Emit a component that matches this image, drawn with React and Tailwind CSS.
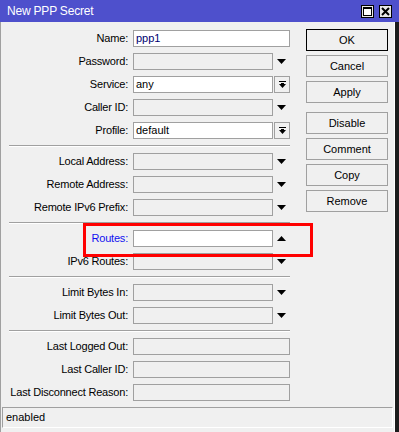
import React from 'react';

const Down = () => (
    <svg width="9" height="5" viewBox="0 0 9 5"><polygon points="0,0 9,0 4.5,5" fill="#000" /></svg>
);
const Up = () => (
    <svg width="9" height="5" viewBox="0 0 9 5"><polygon points="0,5 9,5 4.5,0" fill="#000" /></svg>
);

const Field = ({ label, value = "", white = false, kind = "arrow", blue = false }) => {
    const wide = kind === "wide";
    return (
        <div className="flex items-center h-[17px]">
            <div className={`w-[127px] text-right whitespace-nowrap tracking-[-0.2px] ${blue ? "text-[#1010f0]" : "text-black"}`}>{label}:</div>
            <div
                className={`ml-[5px] h-[17px] border border-[#a0a0a0] pl-[2px] leading-[15px] ${wide ? "w-[157px]" : "w-[140px]"} ${white ? "bg-white" : "bg-[#f0f0f0]"} ${value === "ppp1" ? "text-[#000070]" : "text-black"}`}
            >
                {value}
            </div>
            {kind === "arrow" && (
                <div className="w-[17px] flex justify-center items-center"><Down /></div>
            )}
            {kind === "up" && (
                <div className="w-[17px] flex justify-center items-center"><Up /></div>
            )}
            {kind === "combo" && (
                <div className="ml-[1px] w-[16px] h-[17px] border border-[#a0a0a0] bg-[#f0f0f0] flex items-center justify-center">
                    <svg width="7" height="8" viewBox="0 0 7 8">
                        <rect x="0" y="0" width="7" height="1" fill="#000" />
                        <polygon points="0,3 7,3 3.5,7" fill="#000" />
                        <rect x="2" y="2" width="3" height="2" fill="#000" />
                    </svg>
                </div>
            )}
        </div>
    );
};

const Sep = () => <div className="ml-[8px] w-[281px] h-[2px] border-t border-[#a0a0a0] border-b border-b-white" />;

const Btn = ({ children, primary }) => (
    <div className={`h-[22px] w-[82px] flex items-center justify-center bg-[#f0f0f0] ${primary ? "border border-black" : "border border-[#a0a0a0]"}`}>
        {children}
    </div>
);

export default function App() {
    return (
        <div className="w-[399px] h-[432px] bg-[#f0f0f0] flex flex-col overflow-hidden relative text-[11px]" style={{ fontFamily: '"Liberation Sans", Arial, sans-serif' }}>
            <div className="h-[22px] bg-[#4e50cc] flex items-center pl-[7px] pr-[7px]">
                <span className="text-white text-[12px] tracking-[-0.2px]">New PPP Secret</span>
                <div className="ml-auto flex gap-[5px]">
                    <div className="w-[13px] h-[13px] bg-[#e8e8e8] border border-black flex items-center justify-center">
                        <div className="w-[9px] h-[9px] border border-black border-t-2 bg-white" />
                    </div>
                    <div className="w-[13px] h-[13px] bg-[#e8e8e8] border border-black flex items-center justify-center">
                        <svg width="9" height="9" viewBox="0 0 9 9">
                            <path d="M1 1 L8 8 M8 1 L1 8" stroke="#000" strokeWidth="2" />
                        </svg>
                    </div>
                </div>
            </div>
            <div className="flex-1 flex">
                <div className="flex-1 flex flex-col border-l border-[#a0a0a0]">
                    <div className="flex">
                        <div className="w-[290px] pt-[8px] flex flex-col gap-[6px]">
                            <Field label="Name" value="ppp1" white kind="wide" />
                            <Field label="Password" />
                            <Field label="Service" value="any" white kind="combo" />
                            <Field label="Caller ID" />
                            <Field label="Profile" value="default" white kind="combo" />
                            <Sep />
                            <Field label="Local Address" />
                            <Field label="Remote Address" />
                            <Field label="Remote IPv6 Prefix" />
                            <Sep />
                            <Field label="Routes" white kind="up" blue />
                            <Field label="IPv6 Routes" />
                            <Sep />
                            <Field label="Limit Bytes In" />
                            <Field label="Limit Bytes Out" />
                            <Sep />
                            <Field label="Last Logged Out" kind="wide" />
                            <Field label="Last Caller ID" kind="wide" />
                            <Field label="Last Disconnect Reason" kind="wide" />
                        </div>
                        <div className="ml-[15px] pt-[7px] flex flex-col gap-[4px]">
                            <Btn primary>OK</Btn>
                            <Btn>Cancel</Btn>
                            <Btn>Apply</Btn>
                            <div className="mt-[5px] flex flex-col gap-[4px]">
                                <Btn>Disable</Btn>
                                <Btn>Comment</Btn>
                                <Btn>Copy</Btn>
                                <Btn>Remove</Btn>
                            </div>
                        </div>
                    </div>
                    <div className="mt-[6px] ml-[1px] mr-[1px] h-[21px] border-t border-l border-[#a0a0a0] border-r border-r-white border-b border-b-white flex items-center pl-[3px]">
                        enabled
                    </div>
                </div>
                <div className="w-[1px] bg-white" />
                <div className="w-[4px] bg-[#1c1c1c]" />
            </div>
            <div className="absolute left-[83px] top-[223px] w-[230px] h-[34px] border-[3px] border-[#ff0000]" />
        </div>
    );
}
